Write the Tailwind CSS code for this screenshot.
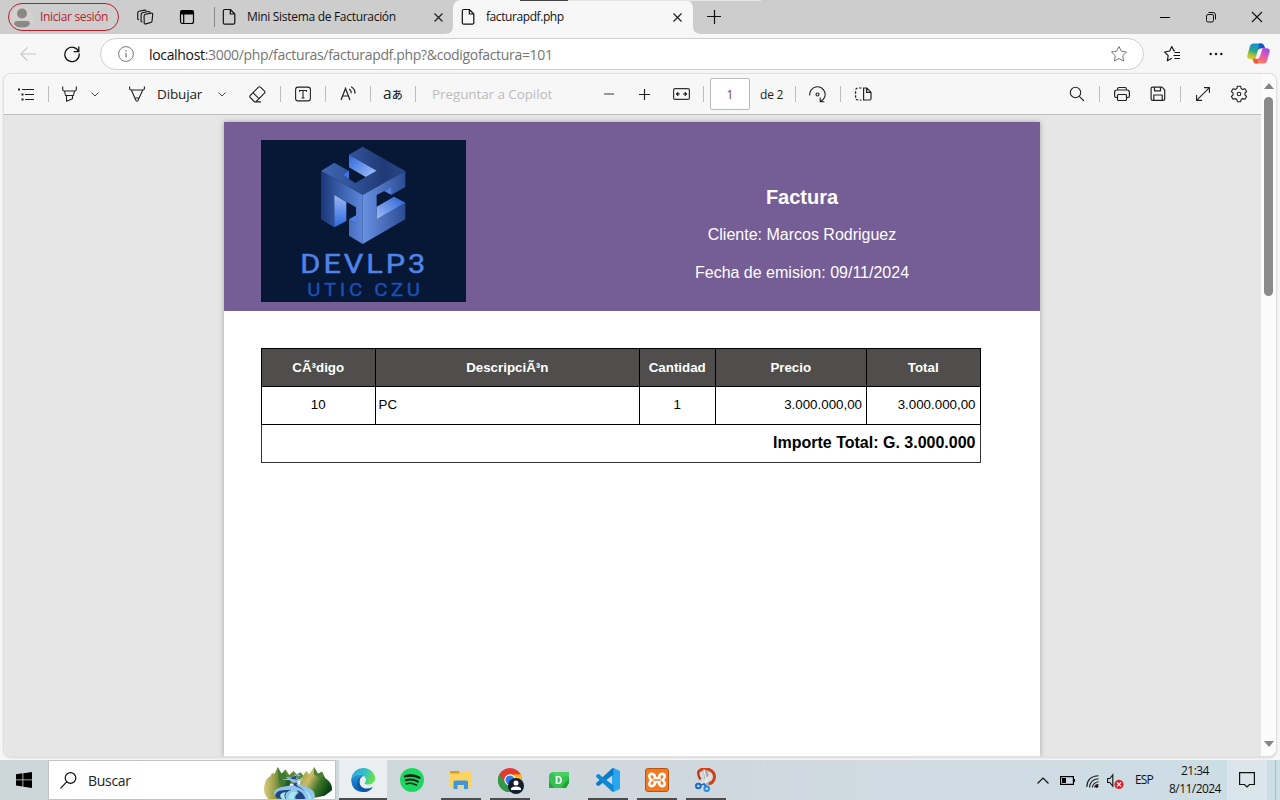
<!DOCTYPE html>
<html lang="es">
<head>
<meta charset="utf-8">
<title>facturapdf.php</title>
<script src="https://cdn.jsdelivr.net/npm/@tailwindcss/browser@4"></script>
</head>
<body class="w-[1280px] h-[800px] overflow-hidden flex flex-col bg-[#f7f7f7] font-['Open_Sans','Noto_Sans',sans-serif] text-[#111]">

<!-- Tab strip -->
<header class="relative h-[34px] shrink-0 bg-[#cdcdcd] flex items-center">
  <div class="ml-2 w-[111px] h-7 rounded-full border border-[#b5202b] flex items-center pl-[2px]">
    <svg class="w-[23px] h-[23px]" viewBox="0 0 23 23"><circle cx="11.500" cy="11.500" r="11" fill="#d3d1ce"/><circle cx="11" cy="7.500" r="5" fill="#8a8886"/><path d="M3 18q0-3 3-3h10q3 0 3 3-2 3.500-8 3.500T3 18z" fill="#8a8886"/></svg>
    <span class="ml-[6px] text-[12px] tracking-[-0.35px] text-[#b5252e] whitespace-nowrap">Iniciar sesión</span>
  </div>
  <svg class="ml-[18px] w-[17px] h-[17px]" viewBox="0 0 17 17" fill="none" stroke="#111" stroke-width="1.100" stroke-linejoin="round" stroke-linecap="round"><path d="M8.500 5.300l5.500-1.200q1.600-.2 1.700 1.200l-.6 6.500q-.1 1.300-1.400 1.700l-4.800 1.400q-1.800.5-1.700-1.200L7.100 7q0-1.400 1.400-1.700z"/><path d="M5 13q-1-.3-.9-1.300V5.500q0-1.300 1.400-1.700l6-1.300q1-.2 1.300.5"/><path d="M1.700 10.800q-1-.3-1-1.300V4q0-1.300 1.400-1.700l5.500-1.200q1-.2 1.500.5"/></svg>
  <svg class="ml-[25px] w-4 h-4" viewBox="0 0 16 16" fill="none" stroke="#000"><rect x="1.500" y="1.500" width="13" height="13" rx="2" stroke-width="1.200"/><path d="M1.500 3.500h13" stroke-width="4"/><path d="M4.700 5v9.500" stroke-width="1.200"/></svg>
  <div class="ml-[19px] w-px h-5 bg-[#888]"></div>
  <svg class="ml-[7px] w-[14px] h-[18px]" viewBox="0 0 14 18" fill="none" stroke="#111" stroke-width="1.200" stroke-linejoin="round"><path d="M2.800 1.500h5.500l4.500 4.500v8.700q0 1.500-1.500 1.500H2.800q-1.500 0-1.500-1.500V3q0-1.500 1.500-1.500z"/><path d="M8.300 1.500V6h4.500"/></svg>
  <span class="ml-[11px] w-[180px] text-[12px] tracking-[-0.3px] whitespace-nowrap">Mini Sistema de Facturación</span>
  <svg class="ml-[6px] w-[11px] h-[11px]" viewBox="0 0 11 11" stroke="#222" stroke-width="1.200"><path d="M1.500 1.500l8 8M9.500 1.500l-8 8"/></svg>
  <div class="relative ml-[9px] w-[240px] h-[34px] bg-[#f7f7f7] rounded-t-lg flex items-center">
    <svg class="absolute -left-2 bottom-0 w-2 h-2" viewBox="0 0 8 8"><path d="M8 0v8H0Q8 8 8 0z" fill="#f7f7f7"/></svg>
    <svg class="absolute -right-2 bottom-0 w-2 h-2" viewBox="0 0 8 8"><path d="M0 0v8h8Q0 8 0 0z" fill="#f7f7f7"/></svg>
    <svg class="ml-2 w-[14px] h-[18px]" viewBox="0 0 14 18" fill="none" stroke="#111" stroke-width="1.200" stroke-linejoin="round"><path d="M2.800 1.500h5.500l4.500 4.500v8.700q0 1.500-1.500 1.500H2.800q-1.500 0-1.500-1.500V3q0-1.500 1.500-1.500z"/><path d="M8.300 1.500V6h4.500"/></svg>
    <span class="ml-[11px] w-[180px] text-[12px] tracking-[-0.42px] whitespace-nowrap">facturapdf.php</span>
    <svg class="ml-[6px] w-[11px] h-[11px]" viewBox="0 0 11 11" stroke="#222" stroke-width="1.200"><path d="M1.500 1.500l8 8M9.500 1.500l-8 8"/></svg>
  </div>
  <svg class="ml-[14px] w-[14px] h-[14px]" viewBox="0 0 14 14" stroke="#111" stroke-width="1.200"><path d="M0 6.500h14M7.500 0v14"/></svg>
  <svg class="ml-auto w-[10px] h-3" viewBox="0 0 10 12" stroke="#000"><path d="M0 6.500h10"/></svg>
  <svg class="ml-9 w-[10px] h-[10px] overflow-visible" viewBox="0 0 10 10" fill="none" stroke="#111"><rect x=".5" y="2.500" width="7" height="7.500" rx="1.500"/><path d="M2.500.5H7q2.500 0 2.500 2.500v4.500"/></svg>
  <svg class="ml-9 mr-[18px] w-[10px] h-[10px] overflow-visible" viewBox="0 0 10 10" stroke="#111" stroke-width="1.100"><path d="M0 0l10 10M10 0L0 10"/></svg>
  <div class="absolute left-[520px] top-0 w-12 h-px bg-[#444]"></div>
  <div class="absolute left-[568px] top-0 w-[193px] h-px bg-[#e4e4e4]"></div>
</header>

<!-- Address bar -->
<nav class="h-[39px] shrink-0 bg-[#f7f7f7] flex items-center">
  <svg class="ml-5 w-4 h-4" viewBox="0 0 16 16" fill="none" stroke="#c6c6c6" stroke-width="1.100"><path d="M16 8H.8M7.500 1.300L.8 8l6.700 6.700"/></svg>
  <svg class="ml-7 w-4 h-[18px]" viewBox="0 0 16 18" fill="none" stroke="#111" stroke-width="1.300" stroke-linecap="round"><path d="M14.600 6.500A7.200 7.200 0 1 0 15.200 9"/><path d="M14.800 2v4.700h-4.600"/></svg>
  <div class="ml-5 mt-px w-[1044px] h-8 rounded-full bg-white border border-[#cfcfcf] flex items-center">
    <svg class="ml-[17px] w-4 h-4" viewBox="0 0 16 16" fill="none" stroke="#777"><circle cx="8" cy="8" r="7.400"/><path d="M8 7v4.500M8 4.300v1.400" stroke-width="1.200"/></svg>
    <span class="ml-[15px] text-[14px] tracking-[-0.33px] whitespace-nowrap text-[#757575]"><span class="text-[#111]">localhost</span>:3000/php/facturas/facturapdf.php?&amp;codigofactura=101</span>
    <svg class="ml-auto mr-4 w-4 h-4 overflow-visible" viewBox="0 0 16 16" fill="none" stroke="#777" stroke-linejoin="round"><path d="M8 .5l2.300 4.800 5.200.7-3.800 3.700.9 5.300L8 12.500 3.400 15l.9-5.300L.5 6l5.200-.7z"/></svg>
  </div>
  <svg class="ml-5 w-4 h-4 overflow-visible" viewBox="0 0 16 16" fill="none" stroke="#111" stroke-width="1.100" stroke-linejoin="round"><path d="M11 4.800L9.800 4.700 7.800.6 5.700 5 .6 6l3.600 3.600-.9 5.200 4.500-2.500"/><path d="M10.500 6.500h5.500M9.500 9.500H16M10.500 12.500H16" stroke-width="1.200"/></svg>
  <svg class="ml-[29px] w-[14px] h-4" viewBox="0 0 14 16" fill="#111"><circle cx="1.700" cy="8" r="1.200"/><circle cx="7" cy="8" r="1.200"/><circle cx="12.300" cy="8" r="1.200"/></svg>
  <svg class="ml-6 w-[23px] h-[21px]" viewBox="0 0 23 21">
    <defs>
      <linearGradient id="ca" x1=".5" y1="0" x2=".2" y2="1"><stop offset="0" stop-color="#1390d8"/><stop offset=".45" stop-color="#2aa58f"/><stop offset=".75" stop-color="#a6c53a"/><stop offset="1" stop-color="#f4c521"/></linearGradient>
      <linearGradient id="cb" x1=".7" y1="0" x2=".2" y2="1"><stop offset="0" stop-color="#a34be8"/><stop offset=".5" stop-color="#e85fa5"/><stop offset="1" stop-color="#ff8a4a"/></linearGradient>
    </defs>
    <path d="M6 .5h7.500q2 0 1.500 2L12 13q-.8 3-3.500 3H3Q-.5 16 .5 12L3 3Q3.700.5 6 .5z" fill="url(#ca)"/>
    <path d="M12 .5h3q1.500 0 2.300 2.500l1 2.500H14q-2 0-2.500 2z" fill="#1b55c4"/>
    <path d="M17 20.500H9q-2 0-1.400-2L10.700 8q.8-2.700 3.300-2.700h5.500q4 0 3 4L20 18q-.7 2.500-3 2.500z" fill="url(#cb)"/>
    <path d="M11 20.500H8.500q-1.500 0-2.200-2.500l-1-2.300h3.500q1.700 0 2.200-2z" fill="#f0583c"/>
    <path d="M10.500 8.500q.8-3 3.500-3.100h1.500L13 13q-.9 2.600-2.800 3H8.500z" fill="#f7f7f7"/>
  </svg>
</nav>

<!-- PDF viewer -->
<main class="ml-[3px] w-[1274px] h-[684px] shrink-0 rounded-lg border border-[#e0e0e0] overflow-hidden flex bg-[#fbfbfb] shadow-sm">
  <section class="w-[1257px] flex flex-col">
    <div class="h-[41px] shrink-0 bg-[#f7f7f7] border-b border-[#bdbdbd] flex items-center text-[14px]">
      <svg class="ml-[14px] w-4 h-4" viewBox="0 0 16 16" fill="none" stroke="#222" stroke-width="1.200"><path d="M4 3.500h12M7 8.500h9M7 13.500h9"/><path d="M0 3.500h2M3.500 8.500h2M3.500 13.500h2" stroke-width="1.800"/></svg>
      <div class="ml-[14px] w-px h-4 bg-[#bdbdbd]"></div>
      <svg class="ml-[13px] w-[15px] h-4" viewBox="0 0 15 16" fill="none" stroke="#222" stroke-width="1.100" stroke-linejoin="round"><path d="M.7.500v3q0 1.500 1.500 1.500h10.600q1.500 0 1.500-1.500v-3"/><path d="M2.500 5l1 4.500h8l1-4.500M4.500 9.500v5.800l6-2.500V9.500"/></svg>
      <svg class="ml-[14px] w-2 h-2" viewBox="0 0 8 8" fill="none" stroke="#444"><path d="M.5 2.500L4 6l3.500-3.500"/></svg>
      <svg class="ml-[30px] w-4 h-4" viewBox="0 0 16 16" fill="none" stroke="#222" stroke-width="1.100" stroke-linejoin="round"><path d="M.6.500v2q0 1.500 1.500 1.500h11.800q1.500 0 1.500-1.500v-2"/><path d="M2.300 4L7 14.500q1 1.500 2 0L13.700 4M5.800 12h4.400"/></svg>
      <span class="ml-3 mt-px w-[49px] text-[13.500px] tracking-[-0.15px] text-[#222]">Dibujar</span>
      <svg class="ml-[12px] w-2 h-2" viewBox="0 0 8 8" fill="none" stroke="#444"><path d="M.5 2.500L4 6l3.500-3.500"/></svg>
      <svg class="ml-[23px] w-[17px] h-[17px]" viewBox="0 0 17 17" fill="none" stroke="#222" stroke-width="1.100" stroke-linejoin="round"><path d="M1.200 9.500L9.500 1.200q1-.9 2 0l4 4q.9 1 0 2L7.200 15.500q-1 .9-2 0l-4-4q-.9-1 0-2zM4 6.700l6 6M6 15.900h6"/></svg>
      <div class="ml-[14px] w-px h-4 bg-[#bdbdbd]"></div>
      <svg class="ml-[14px] w-4 h-4" viewBox="0 0 16 16" fill="none" stroke="#222" stroke-width="1.100"><rect x=".6" y="1.100" width="14.800" height="13.800" rx="2.500"/><path d="M4.500 5.800V4.500h7v1.300M8 4.500v7.500M6.500 12h3"/></svg>
      <div class="ml-[14px] w-px h-4 bg-[#bdbdbd]"></div>
      <svg class="ml-[14px] w-[17px] h-4" viewBox="0 0 17 16" fill="none" stroke="#222" stroke-width="1.200"><path d="M1 14L5.500 2.500 10 14M2.600 10h5.800"/><path d="M9.500 3.300q1.800 1.300 1.800 3.400M11.500 1q3.500 2 3.500 6.200" stroke-linecap="round"/></svg>
      <div class="ml-[13px] w-px h-4 bg-[#bdbdbd]"></div>
      <span class="ml-3 w-5 flex items-baseline text-[#222] whitespace-nowrap leading-none"><span class="text-[15.500px]">a</span><span class="text-[11px] font-['Noto_Sans_CJK_JP',sans-serif] font-medium">あ</span></span>
      <div class="ml-3 w-px h-4 bg-[#bdbdbd]"></div>
      <span class="ml-4 mt-px w-[126px] text-[13.500px] tracking-[-0.1px] text-[#bcbcbc] whitespace-nowrap">Preguntar a Copilot</span>
      <svg class="ml-[46px] w-[10px] h-3" viewBox="0 0 10 12" stroke="#777" stroke-width="1.500"><path d="M0 6h10"/></svg>
      <svg class="ml-[25px] w-[11px] h-[11px]" viewBox="0 0 11 11" stroke="#222" stroke-width="1.200"><path d="M0 5.500h11M5.500 0v11"/></svg>
      <svg class="ml-[23px] w-[17px] h-3" viewBox="0 0 17 12" fill="none" stroke="#333" stroke-width="1.200"><rect x=".6" y=".6" width="15.800" height="10.800" rx="1.500"/><path d="M3 6h4M10 6h4"/><path d="M5 4L3 6l2 2zM12 4l2 2-2 2z" fill="#222" stroke-width=".8"/></svg>
      <div class="ml-[13px] w-px h-4 bg-[#bdbdbd]"></div>
      <div class="ml-[6px] w-10 h-8 bg-white border border-[#b9b9b9] rounded-[2px] flex items-center justify-center pt-px text-[12px] text-[#8b3a34]">1</div>
      <span class="ml-[10px] mt-px w-[25px] text-[12px] tracking-[-0.2px] text-[#222] whitespace-nowrap">de 2</span>
      <div class="ml-[10px] w-px h-4 bg-[#bdbdbd]"></div>
      <svg class="ml-[13px] w-[17px] h-[17px]" viewBox="0 0 17 17" fill="none" stroke="#222" stroke-width="1.100"><path d="M.8 9.500A7.700 7.700 0 1 1 11.500 15.500M11.200 11.500v4.300h4.200"/><circle cx="8.500" cy="8.500" r="1.500"/></svg>
      <div class="ml-[14px] w-px h-4 bg-[#bdbdbd]"></div>
      <svg class="ml-[14px] w-[17px] h-[14px]" viewBox="0 0 17 14" fill="none" stroke="#222" stroke-width="1.200"><path d="M6.500 1H3Q.6 1 .6 3.500v7Q.6 13 3 13h3.500" stroke-dasharray="2.500 1.500"/><path d="M8.600 1h3.200l4.200 4.200v6.300q0 1.500-1.500 1.500H8.600zM11.600 1v4.400H16"/></svg>
      <svg class="ml-auto w-4 h-4" viewBox="0 0 16 16" fill="none" stroke="#222" stroke-width="1.100"><circle cx="6.500" cy="6.500" r="5.200"/><path d="M10.300 10.300l4.700 4.700"/></svg>
      <div class="ml-[14px] w-px h-4 bg-[#bdbdbd]"></div>
      <svg class="ml-[14px] w-4 h-4" viewBox="0 0 16 16" fill="none" stroke="#222" stroke-width="1.200"><path d="M3.500 4V3q0-1.500 1.500-1.500h6q1.500 0 1.500 1.500v1M3.500 11.500H2q-1.400 0-1.400-1.400V6.500Q.6 4 3 4h10q2.400 0 2.400 2.500v3.600q0 1.400-1.400 1.400h-1.500"/><rect x="3.500" y="8.500" width="9" height="6" rx="1"/></svg>
      <svg class="ml-5 w-4 h-4" viewBox="0 0 16 16" fill="none" stroke="#222" stroke-width="1.200" stroke-linejoin="round"><path d="M2.600 1.200H12l2.700 2.700v9q0 1.500-1.500 1.500H2.600q-1.500 0-1.500-1.500V2.700q0-1.500 1.500-1.500z"/><path d="M4.500 1.200v3.600h6V1.200M3.800 14.400V9h8.400v5.400"/></svg>
      <div class="ml-[14px] w-px h-4 bg-[#bdbdbd]"></div>
      <svg class="ml-[15px] w-[14px] h-[14px]" viewBox="0 0 14 14" fill="none" stroke="#222" stroke-width="1.100"><path d="M.8 13.200L13.200.8M8 .6h5.400V6M.6 8v5.400H6"/></svg>
      <svg class="ml-5 mr-[13px] w-[18px] h-[18px]" viewBox="0 0 18 18" fill="none" stroke="#222" stroke-width="1.100" stroke-linejoin="round"><path d="M7.400 1.200h3.200l.5 2.300 1.600.9 2.300-.7 1.600 2.800-1.700 1.600v1.800l1.700 1.600-1.600 2.800-2.300-.7-1.600.9-.5 2.300H7.400l-.5-2.300-1.600-.9-2.300.7-1.600-2.800 1.700-1.600V8.100L1.400 6.500 3 3.700l2.300.7 1.600-.9z"/><circle cx="9" cy="9" r="1.800"/></svg>
    </div>
    <div class="flex-1 bg-[#e6e6e6] overflow-hidden flex flex-col pt-[7px]">
      <article class="ml-[220px] w-[816px] flex-1 bg-white shadow-[0_0_5px_rgba(0,0,0,0.3)] font-['Liberation_Sans',Arial,sans-serif]">
        <div class="h-[189px] bg-[#755d96] flex">
          <svg class="ml-[37px] mt-[18px] w-[205px] h-[162px]" viewBox="33 30 615 486" preserveAspectRatio="none">
            <defs>
              <linearGradient id="t" x1="0" x2="1"><stop offset="0" stop-color="#3f66b4"/><stop offset=".5" stop-color="#2b4a8c"/><stop offset=".75" stop-color="#1f3a75"/><stop offset="1" stop-color="#29488b"/></linearGradient>
              <linearGradient id="l" x1="0" x2="1"><stop offset="0" stop-color="#1b3778"/><stop offset=".5" stop-color="#3b61ae"/><stop offset="1" stop-color="#5f87da"/></linearGradient>
              <linearGradient id="r" x1="0" x2="1"><stop offset="0" stop-color="#6a92e4"/><stop offset="1" stop-color="#2b4c92"/></linearGradient>
              <linearGradient id="w" x1="0" y1="0" x2="1" y2=".7"><stop offset="0" stop-color="#2c68dc"/><stop offset="1" stop-color="#9ab8f6"/></linearGradient>
              <linearGradient id="v" x1="0" y1="0" x2="0" y2="1"><stop offset="0" stop-color="#9ab8f6"/><stop offset="1" stop-color="#2c68dc"/></linearGradient>
              <linearGradient id="u" x1="0" y1="1" x2="1" y2="0"><stop offset="0" stop-color="#a0bdf8"/><stop offset="1" stop-color="#2660d4"/></linearGradient>
              <pattern id="g" x="20" y="40" width="52" height="52" patternUnits="userSpaceOnUse"><path d="M0 0h52M0 0v52" stroke="#05142f" stroke-width="3"/></pattern>
            </defs>
            <rect x="33" y="30" width="615" height="486" fill="#071837"/><rect x="33" y="30" width="615" height="486" fill="url(#g)"/>
            <path d="M338 50L466 123 338 195 213 123 253 98 297 123 277 134 316 159 380 122 297 74z" fill="url(#t)"/>
            <path d="M297 74L380 122 347 141 297 112z" fill="url(#w)"/>
            <path d="M277 134L297 122V147z" fill="#3c74e2"/>
            <path d="M213 123L338 195V342L297 317V268L318 280V232L253 195V292L213 268z" fill="url(#l)"/>
            <path d="M253 195L289 216V273L253 292z" fill="url(#v)"/>
            <path d="M297 268L318 256V280z" fill="#4f80e6"/>
            <path d="M338 195L466 123V171L425 194V172L380 195V268L466 218V268L338 342z" fill="url(#r)"/>
            <path d="M380 230L432 200 466 218 380 268z" fill="url(#u)"/>
            <path d="M402 183L425 171V195z" fill="#4f80e6"/>
            <text transform="translate(151 428) scale(1.150 1)" font-family="Roboto, sans-serif" font-size="80" font-weight="400" stroke="#5083e6" stroke-width="1.500" fill="#5083e6" textLength="326" lengthAdjust="spacing">DEVLP3</text>
            <text transform="translate(172 497) scale(1.150 1)" font-family="Roboto, sans-serif" font-size="53" font-weight="400" stroke="#1c50b8" stroke-width="1" fill="#1c50b8" textLength="294" lengthAdjust="spacing">UTIC CZU</text>
          </svg>
          <div class="ml-[133px] w-[406px] flex flex-col items-center text-white pt-[57px]">
            <h1 class="h-[37px] leading-9 font-bold text-[20px]">Factura</h1>
            <p class="h-[38px] leading-[38px] text-[16px]">Cliente: Marcos Rodriguez</p>
            <p class="h-[38px] leading-[38px] text-[16px]">Fecha de emision: 09/11/2024</p>
          </div>
        </div>
        <table class="ml-[37px] mt-[37px] w-[719px] table-fixed border-collapse text-[13.330px] text-black">
          <colgroup><col class="w-[113.500px]"><col class="w-[264.500px]"><col class="w-[75.500px]"><col class="w-[151.500px]"><col class="w-[113.500px]"></colgroup>
          <thead>
            <tr class="h-[38px] bg-[#504e4c] text-white">
              <th class="border border-black p-0">CÃ³digo</th><th class="border border-black p-0">DescripciÃ³n</th><th class="border border-black p-0">Cantidad</th><th class="border border-black p-0">Precio</th><th class="border border-black p-0">Total</th>
            </tr>
          </thead>
          <tbody>
            <tr class="h-[38px]">
              <td class="border border-black p-0 pb-[2px] text-center">10</td><td class="border border-black p-0 pb-[2px] pl-[3px]">PC</td><td class="border border-black p-0 pb-[2px] text-center">1</td><td class="border border-black p-0 pb-[2px] pr-1 text-right">3.000.000,00</td><td class="border border-black p-0 pb-[2px] pr-1 text-right">3.000.000,00</td>
            </tr>
            <tr class="h-[38px]"><td colspan="5" class="border border-[#333] p-0 pb-[2px] pr-1 text-right font-bold text-[16px]">Importe Total: G. 3.000.000</td></tr>
          </tbody>
        </table>
      </article>
    </div>
  </section>
  <aside class="w-[15px] flex flex-col items-center pt-[9px] pb-[9px]">
    <svg class="w-[10px] h-[6px]" viewBox="0 0 10 6" fill="#858585"><path d="M5 0l5 6H0z"/></svg>
    <div class="mt-2 w-[9px] h-[199px] rounded-full bg-[#8a8a8a]"></div>
    <svg class="mt-auto w-[10px] h-[6px]" viewBox="0 0 10 6" fill="#858585"><path d="M5 6L0 0h10z"/></svg>
  </aside>
</main>

<!-- Taskbar -->
<footer class="mt-[3px] h-10 shrink-0 bg-linear-to-r from-[#cdd7da] via-[#d0d7de] to-[#cddee6] flex items-center">
  <svg class="ml-4 w-4 h-4" viewBox="0 0 16 16" fill="#000"><path d="M0 2.200L6.500 1.300V7.500H0zM7.300 1.200L16 0v7.500H7.300zM0 8.300h6.500v6.200L0 13.600zM7.300 8.300H16V16l-8.700-1.300z"/></svg>
  <div class="ml-4 w-[288px] h-10 bg-white border border-[#c3c3c3] flex items-center">
    <svg class="ml-[11px] w-[17px] h-[17px]" viewBox="0 0 17 17" fill="none" stroke="#111" stroke-width="1.200"><circle cx="10.500" cy="6" r="5.300"/><path d="M6.700 9.800L.5 16.300"/></svg>
    <span class="ml-[11px] text-[14px] tracking-[-0.3px] text-[#222]">Buscar</span>
    <svg class="ml-auto mr-[2px] mt-[6px] w-[70px] h-8" viewBox="789 84 210 96" preserveAspectRatio="none">
      <defs>
        <linearGradient id="m1" x1="0" x2="1"><stop offset="0" stop-color="#dccb80"/><stop offset=".4" stop-color="#98a048"/><stop offset=".75" stop-color="#2f6a28"/><stop offset="1" stop-color="#1d5620"/></linearGradient>
        <linearGradient id="m2" x1="0" y1="0" x2="1" y2=".5"><stop offset="0" stop-color="#7f9a48"/><stop offset=".4" stop-color="#cdbb66"/><stop offset=".7" stop-color="#3c7528"/><stop offset="1" stop-color="#0a4415"/></linearGradient>
      </defs>
      <path d="M840 112l16-21 12 17 12-12 10 10 12-6 10 12-30 22h-30z" fill="#5f8a3e"/>
      <path d="M793 140q2-20 18-28l5-10 8 2 9-20 11 20 9-6 8 16 8 6q6 20-10 32l-24 28h-30q-18-20-12-40z" fill="url(#m1)"/>
      <path d="M833 84l11 20 9-6 10 20-12 22-14-12z" fill="#3f7a30"/>
      <path d="M902 122l16-26 10 10 14-22 12 20 12-6 10 20q22 14 20 36l-22 16-30 6-22-20-24-12z" fill="url(#m2)"/>
      <path d="M942 84l12 20 12-6 6 14-16 4-14-10z" fill="#4a8136"/>
      <path d="M888 105l14 4-18 6 10 5 20 2-26 5q-6 2 4 8 36 8 48 22 8 12 2 23h-80q-44-8-40-20 4-14 36-18l22-4q8-4-2-9l-10-5-24-2 20-3-8-6 20 3z" fill="#8fc4ec"/>
      <path d="M892 108l-22 10 24 6-8-6zM848 123l22 2 4 3zM898 130l-16 2q-6 4 4 10 26 8 30 22-4-14-22-22-10-6 4-12z" fill="#22457e"/>
      <path d="M826 168q2-12 22-14l26-2q-18 6-18 18l2 10h-16q-16-2-16-12zM886 180q-2-12 10-18l-6-8q20 4 26 26z" fill="#22457e"/>
      <path d="M866 180q-4-14 12-22l14 2q-12 8-10 20zM846 180q-12-12 2-19l10-2q-8 8-2 21zM926 180q0-14-14-26 20 8 22 26z" fill="#a8e8ea"/>
    </svg>
  </div>
  <div class="ml-[3px] flex gap-px h-10">
    <div class="w-12 flex flex-col items-center justify-between pt-2 bg-[#ebeef1]">
      <svg class="w-6 h-6" viewBox="0 0 24 24">
        <defs><linearGradient id="e1" x1="0" y1="0" x2="1" y2=".3"><stop offset="0" stop-color="#2a9fe0"/><stop offset=".6" stop-color="#35c1c8"/><stop offset="1" stop-color="#63e04e"/></linearGradient><linearGradient id="e2" x1="0" y1="0" x2="0" y2="1"><stop offset="0" stop-color="#2196dc"/><stop offset="1" stop-color="#0d5bae"/></linearGradient></defs>
        <path d="M.3 11A12 12 0 0 1 12 0q7 0 10.500 5.500T22.500 14q-1.500 2.500-5 2.500-4 0-4-1.500 1.500-1 1.500-3.500Q14 7 9 6.500 3 6.500.3 11z" fill="url(#e1)"/>
        <path d="M.2 11Q3 6.500 9 6.500q3 0 4.500 1.500-5 .5-5.300 5.500 0 5 5 7.500 4 1 8.500-1.500Q18 24 12 24 .5 23.500.2 11z" fill="url(#e2)"/>
        <path d="M8.500 14q0 5 5.500 6.500 4 .5 7.700-1.500-3 4.500-8 5Q6 22 6 16q.5-6 5.500-8-3 2-3 6z" fill="#0c59a4"/>
      </svg>
      <div class="w-12 h-[2px] bg-[#4a4c4e]"></div>
    </div>
    <div class="w-12 flex flex-col items-center pt-2">
      <svg class="w-6 h-6" viewBox="0 0 24 24"><circle cx="12" cy="12" r="12" fill="#1ed760"/><g fill="none" stroke="#0b1f12" stroke-linecap="round"><path d="M5 8.300q7.500-2.200 14.500 1.500" stroke-width="2.400"/><path d="M5.700 12.200q6.500-1.800 12.300 1.400" stroke-width="2"/><path d="M6.200 15.800q5.500-1.400 10.300 1.300" stroke-width="1.600"/></g></svg>
    </div>
    <div class="w-12 flex flex-col items-center justify-between pt-2">
      <svg class="w-6 h-6" viewBox="0 0 24 24"><path d="M1 4q0-1 1-1h7.500l1.500 1.500V7H1z" fill="#dd9e11"/><path d="M1 5.500h9.500L12 4h9.500q1 0 1 1v15h-21q-.5 0-.5-.5z" fill="#fcd462"/><path d="M4.500 21v-7q0-1.500 1.500-1.500h11.500q1.500 0 1.500 1.500v7h-4v-4H8.500v4z" fill="#3d96de"/></svg>
      <div class="w-10 h-[2px] bg-[#4a4c4e]"></div>
    </div>
    <div class="w-12 flex flex-col items-center justify-between pt-2">
      <svg class="ml-[2px] w-[26px] h-[26px]" viewBox="0 0 26 26">
        <circle cx="12" cy="12" r="12" fill="#e23c30"/><path d="M1.600 6L7 15l5 3-1.500 6A12 12 0 0 1 1.600 6z" fill="#2a9b48"/><path d="M12 6.500h10.700A12 12 0 0 1 12 24l5-9z" fill="#fbc116"/><circle cx="12" cy="12" r="5.700" fill="#fff"/><circle cx="12" cy="12" r="4.500" fill="#2e7de6"/>
        <circle cx="18" cy="18" r="8" fill="#141d31"/><circle cx="18" cy="15" r="2.500" fill="#fff"/><path d="M13 22v-1q0-2.500 5-2.500t5 2.500v1z" fill="#fff"/></svg>
      <div class="w-10 h-[2px] bg-[#4a4c4e]"></div>
    </div>
    <div class="w-12 flex flex-col items-center pt-3">
      <svg class="w-5 h-4" viewBox="0 0 20 16"><path d="M3 0h17v11l-3 5H0V2.500z" fill="#36c153"/><path d="M0 9l5 7H0zM20 6v5l-3 5h-5z" fill="#1fa53b"/><path d="M3 0h17v4L6 5z" fill="#49d063"/><text x="9.700" y="12" font-family="Roboto, sans-serif" font-weight="bold" font-size="11" fill="#fff" text-anchor="middle">D</text></svg>
    </div>
    <div class="w-12 flex flex-col items-center justify-between pt-2">
      <svg class="w-6 h-6" viewBox="0 0 24 24"><path d="M17.500 0L24 3v18l-6.500 3-1.500-1V1z" fill="#2aa5ef"/><path d="M17.500 0v6.500L3 17.800q-.8.500-1.500 0L.3 16.500q-.5-.8 0-1.500L16 .6z" fill="#0b79c4"/><path d="M17.500 24v-6.500L3 6.200q-.8-.5-1.500 0L.3 7.500q-.5.800 0 1.500L16 23.400z" fill="#0d8ad6"/></svg>
      <div class="w-10 h-[2px] bg-[#4a4c4e]"></div>
    </div>
    <div class="w-12 flex flex-col items-center justify-between pt-2">
      <svg class="w-6 h-6" viewBox="0 0 24 24"><rect x=".5" y=".5" width="23" height="23" rx="2.500" fill="#f27a22" stroke="#b8560f"/><path d="M7.500 6Q4.300 5.500 4.300 8.300q0 2.200 2.300 3.700-2.300 1.500-2.300 3.700 0 2.800 3.200 2.300 2.700-.5 2.200-4h4.600q-.5 3.500 2.200 4 3.200.5 3.200-2.300 0-2.200-2.300-3.700 2.300-1.500 2.300-3.700 0-2.800-3.200-2.300-2.700.5-2.200 4H9.700q.5-3.500-2.200-4z" fill="none" stroke="#fff" stroke-width="2.600"/></svg>
      <div class="w-10 h-[2px] bg-[#4a4c4e]"></div>
    </div>
    <div class="w-12 flex flex-col items-center justify-between pt-2">
      <svg class="w-6 h-6" viewBox="0 0 24 24"><path d="M4.500 3.500Q9-.5 14.500 1.300q6 2.200 6 7.500-.5 6-6 7" fill="none" stroke="#d2400f" stroke-width="3"/><path d="M4.500 3Q3.500 7 6.500 11.500" fill="none" stroke="#b53410" stroke-width="2.200"/><path d="M9 1l4.500 1.500 2 9.500-1.500 5.500-2.500.5z" fill="#a9adb2"/><path d="M17.500 5v6.500l-9 6-2-2z" fill="#dfe2e5"/><path d="M10 2l3 13" stroke="#eceef0" stroke-width="1.200"/><circle cx="4.300" cy="18" r="2.300" fill="#d0d7de" stroke="#1a6cc2" stroke-width="2"/><circle cx="12.700" cy="20.700" r="2.300" fill="#d0d7de" stroke="#2c8cdc" stroke-width="2"/><path d="M7 17l3-1 2 2.500" fill="none" stroke="#1a6cc2" stroke-width="1.500"/></svg>
      <div class="w-10 h-[2px] bg-[#4a4c4e]"></div>
    </div>
  </div>
  <div class="ml-auto flex items-center h-10">
    <svg class="w-3 h-[7px]" viewBox="0 0 12 7" fill="none" stroke="#111" stroke-width="1.200"><path d="M.5 6.500L6 1l5.500 5.500"/></svg>
    <svg class="ml-[11px] w-[15px] h-[9px]" viewBox="0 0 15 9"><rect x=".6" y=".6" width="12.800" height="7.800" fill="none" stroke="#000" stroke-width="1.200"/><path d="M2 2h4v5H2zM14 3h1v3h-1z"/></svg>
    <svg class="ml-[11px] mt-[2px] w-[13px] h-[13px]" viewBox="0 0 13 13" fill="none" stroke="#222" stroke-width="1.100"><path d="M.8 12Q1 1.300 12.500.8M3.500 12.500Q4 4.500 12.500 3.800M6.300 12.500Q7 7.500 12.500 6.800"/><circle cx="10.800" cy="11.300" r="1.500" fill="#000" stroke="none"/><path d="M8.500 12.500q.5-3 4-3"/></svg>
    <svg class="ml-2 mt-px w-[17px] h-4" viewBox="0 0 17 16"><path d="M.6 5.500h2.200l3-3.700v11.400l-3-3.700H.6z" fill="none" stroke="#111" stroke-width="1.100"/><circle cx="12" cy="11.400" r="4.600" fill="#d9252d"/><path d="M10 9.400l4 4M14 9.400l-4 4" stroke="#fff" stroke-width="1.300"/></svg>
    <span class="ml-[11px] w-[19px] text-[12px] tracking-[-0.9px] whitespace-nowrap">ESP</span>
    <div class="ml-[11px] w-[60px] flex flex-col items-center text-[12px] leading-[18px] tracking-[-0.55px] whitespace-nowrap"><span>21:34</span><span>8/11/2024</span></div>
    <div class="ml-[2px] w-10 h-10 bg-white/25 flex items-center justify-center">
      <svg class="w-4 h-4" viewBox="0 0 16 16" fill="none" stroke="#111" stroke-width="1.200"><path d="M.6.700h14.800v11.800h-4.900L8 15l-2.500-2.500H.6z"/></svg>
    </div>
    <div class="ml-2 mr-1 w-px h-10 bg-[#a9b6bd]"></div>
  </div>
</footer>
</body>
</html>
